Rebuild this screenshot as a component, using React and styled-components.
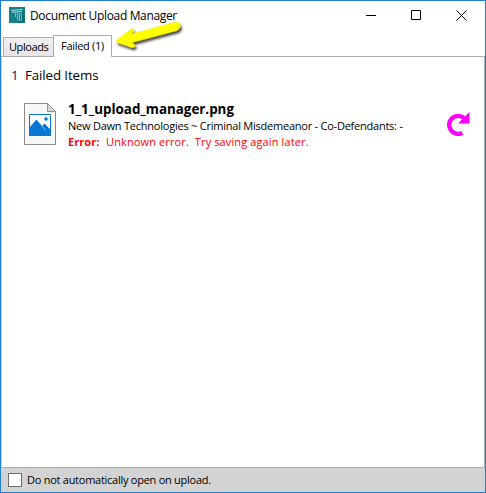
import React from "react";
import styled, { createGlobalStyle } from "styled-components";

const GlobalStyle = createGlobalStyle`
  * { box-sizing: border-box; }
  body { margin: 0; background: #fff; font-family: "Open Sans", "Noto Sans", sans-serif; color: #000; overflow: hidden; }
`;

const Window = styled.div`
  width: 486px;
  height: 493px;
  border: 1px solid #1c7fd2;
  background: #fff;
  display: flex;
  flex-direction: column;
  position: relative;
`;

const TitleBar = styled.header`
  height: 34px;
  display: flex;
  align-items: flex-start;
  padding: 6px 0 0 8px;
`;

const Title = styled.h1`
  margin: 0 0 0 5px;
  flex: 1;
  font-size: 12px;
  font-weight: 400;
  line-height: 17px;
  letter-spacing: ${(p) => p.$spacing}px;
  white-space: nowrap;
`;

const Controls = styled.div`
  display: flex;
  width: 137px;
`;

const Control = styled.button`
  width: 45.5px;
  height: 16px;
  padding: 0;
  border: 0;
  background: none;
  display: flex;
  align-items: center;
  justify-content: center;
`;

const Tabs = styled.nav`
  height: 21px;
  padding-left: 2px;
  display: flex;
  align-items: flex-end;
`;

const Tab = styled.button`
  width: ${(p) => (p.$active ? 59 : 51)}px;
  height: ${(p) => (p.$active ? 22 : 19)}px;
  margin: ${(p) => (p.$active ? "0 0 -1px -1px" : "0")};
  padding: ${(p) => (p.$active ? "0 0 1px 7px" : "0 0 0 5px")};
  border: 1px solid #acacac;
  border-bottom: 0;
  background: ${(p) => (p.$active ? "#fff" : "linear-gradient(#f0f0f0, #e5e5e5)")};
  color: #000;
  font: 11px/18px "Open Sans", sans-serif;
  letter-spacing: ${(p) => p.$spacing}px;
  text-align: left;
  white-space: nowrap;
  z-index: 1;
`;

const Panel = styled.main`
  flex: 1;
  border: 1px solid #acacac;
  border-left-color: #d5d5d5;
`;

const Summary = styled.h2`
  margin: 0;
  padding: 8px 0 0 9px;
  display: flex;
  font-size: 13.3px;
  font-weight: 400;
  line-height: 20px;
  letter-spacing: ${(p) => p.$spacing}px;
`;

const Count = styled.span`
  width: 14px;
  color: #1b0d60;
`;

const Item = styled.article`
  display: flex;
  padding: 18px 14px 0 22px;
`;

const Details = styled.div`
  flex: 1;
  padding-left: 11px;
  white-space: nowrap;
`;

const FileName = styled.div`
  margin-top: -3px;
  font-size: 13.4px;
  font-weight: 700;
  line-height: 18px;
  letter-spacing: ${(p) => p.$spacing}px;
`;

const Line = styled.div`
  font-size: 11px;
  line-height: 16px;
  letter-spacing: ${(p) => p.$spacing}px;
`;

const ErrorLine = styled(Line)`
  display: flex;
  color: #f00;
  white-space: pre;
`;

const ErrorLabel = styled.strong`
  width: 38px;
  letter-spacing: ${(p) => p.$spacing}px;
`;

const Retry = styled.button`
  width: 24px;
  height: 24px;
  margin-top: 9px;
  padding: 0;
  border: 0;
  background: none;
`;

const Footer = styled.footer`
  height: 24px;
  padding-left: 7px;
  display: flex;
  align-items: center;
  background: #d3d3d3;
`;

const Option = styled.label`
  display: flex;
  align-items: center;
  gap: 5px;
  font-size: 11px;
  line-height: 16px;
  letter-spacing: ${(p) => p.$spacing}px;
`;

const Checkbox = styled.input`
  appearance: none;
  width: 14px;
  height: 14px;
  margin: 0;
  border: 1px solid #707070;
  background: #fff;
`;

const Pointer = styled.svg`
  position: absolute;
  left: 113px;
  top: 18px;
  z-index: 2;
  display: block;
  pointer-events: none;
`;

const Icon = styled.svg`
  display: block;
  flex: none;
`;

function AppLogo() {
  return (
    <Icon width="16" height="16" viewBox="0 0 16 16">
      <path fill="#14808b" d="M0 0h16v16H0z" />
      <path fill="#0d6f7a" d="M13 3l3 3v10H9z" />
      <path d="M2 3.5L13.5 2.5M3 5.3L13 4.5" stroke="#b5d9dc" fill="none" />
      <path d="M6.5 6V10M8.5 6V13M10.5 6V14M12.3 6V14" stroke="#8fc4ca" strokeWidth=".9" fill="none" />
    </Icon>
  );
}

function FileIcon() {
  return (
    <Icon width="33" height="42" viewBox="0 0 33 42">
      <path d="M.5.5H23.5L31.5 8.5V41.5H.5z" fill="#f7f7f7" stroke="#8b8b8b" />
      <path d="M23.5.5V8.5H31.5z" fill="#d8d8d8" stroke="#929292" />
      <path d="M5.5 11.5H26.5V32.5H5.5z" fill="#fff" stroke="#0878d4" />
      <path d="M5 25L12.5 16.5L18 23L20.5 20.5L27 27V33H5z" fill="#0878d4" />
      <path d="M17.5 22.5l4 5" stroke="#8abdec" />
      <circle cx="22" cy="16" r="1.8" fill="#0878d4" />
    </Icon>
  );
}

export default function App() {
  return (
    <>
      <GlobalStyle />
      <Window>
        <TitleBar>
          <AppLogo />
          <Title $spacing={-0.34}>Document Upload Manager</Title>
          <Controls>
            <Control aria-label="Minimize">
              <Icon width="11" height="11"><path d="M1 5.5H11" stroke="#000" /></Icon>
            </Control>
            <Control aria-label="Maximize">
              <Icon width="10" height="10"><path d="M.5.5H9.5V9.5H.5z" fill="none" stroke="#000" /></Icon>
            </Control>
            <Control aria-label="Close">
              <Icon width="11" height="11"><path d="M.5.5L10.5 10.5M10.5.5L.5 10.5" stroke="#000" /></Icon>
            </Control>
          </Controls>
        </TitleBar>
        <Tabs>
          <Tab $spacing={-0.4}>Uploads</Tab>
          <Tab $active $spacing={-0.3}>Failed (1)</Tab>
        </Tabs>
        <Panel>
          <Summary $spacing={-0.1}><Count>1</Count><span>Failed Items</span></Summary>
          <Item>
            <FileIcon />
            <Details>
              <FileName $spacing={-0.02}>1_1_upload_manager.png</FileName>
              <Line $spacing={-0.23}>New Dawn Technologies ~ Criminal Misdemeanor - Co-Defendants: -</Line>
              <ErrorLine $spacing={0.12}>
                <ErrorLabel $spacing={0.05}>Error:</ErrorLabel>
                <span>{"Unknown error.  Try saving again later."}</span>
              </ErrorLine>
            </Details>
            <Retry aria-label="Retry upload">
              <Icon width="24" height="24" viewBox="0 0 24 24">
                <path d="M16.3 20.9A9 9 0 1 1 18 6" fill="none" stroke="#f0f" strokeWidth="4.4" />
                <path d="M23.5 0V11.5H12z" fill="#f0f" />
              </Icon>
            </Retry>
          </Item>
        </Panel>
        <Footer>
          <Option $spacing={-0.26}><Checkbox type="checkbox" />Do not automatically open on upload.</Option>
        </Footer>
        <Pointer width="76" height="38" viewBox="0 0 76 38">
          <defs>
            <filter id="shadow" x="-10%" y="-20%" width="130%" height="160%">
              <feDropShadow dx="1.5" dy="2.5" stdDeviation="1.1" floodColor="#000" floodOpacity="0.75" />
            </filter>
          </defs>
          <path
            d="M2.3 22Q2 21 4 20L16.5 10.5Q20 8.5 19.5 11.5L17.5 15L61.5 3Q65 2.5 66 5.5Q67 9 63 11.5L17.8 23.5L21 26Q21.5 28.5 18 28.5L4 23.8Q2.3 23 2.3 22Z"
            fill="#ff0" stroke="#e8e700" strokeWidth=".4" filter="url(#shadow)"
          />
        </Pointer>
      </Window>
    </>
  );
}
